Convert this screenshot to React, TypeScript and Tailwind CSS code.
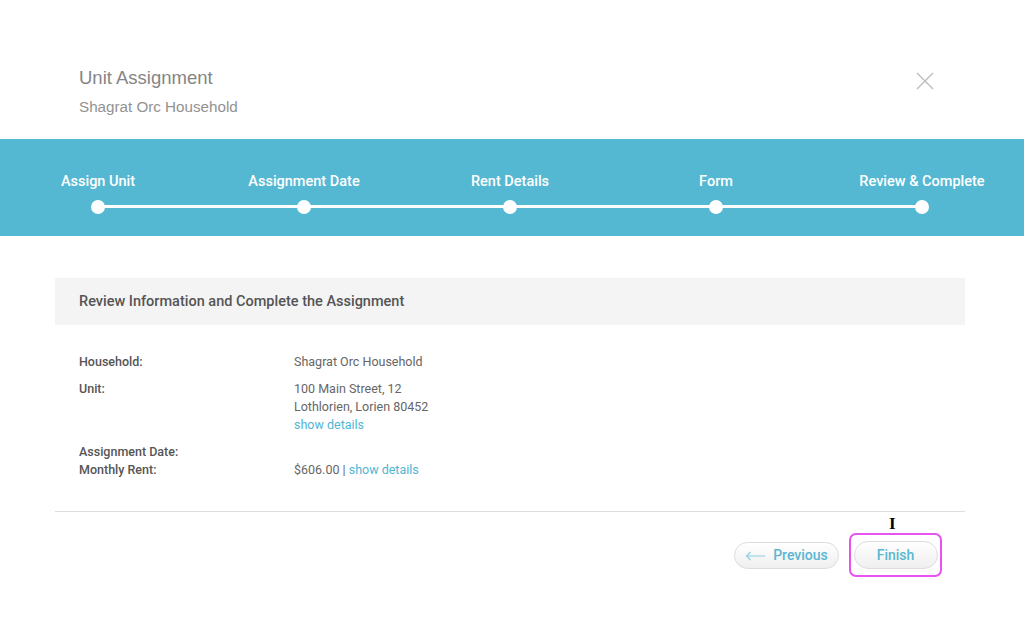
import React from "react";

const steps = ["Assign Unit", "Assignment Date", "Rent Details", "Form", "Review & Complete"];

const rows: { label: string; value?: React.ReactNode }[] = [
  { label: "Household:", value: "Shagrat Orc Household" },
];

function Stepper() {
  return (
    <div className="h-[97px] w-full overflow-hidden bg-[#55b8d2]">
      <div className="relative ml-[-5px] w-[1030px] pt-[34px]">
        <div className="absolute left-[103px] right-[103px] top-[66px] h-[3px] bg-white" />
        <div className="grid grid-cols-5">
          {steps.map((s) => (
            <div key={s} className="flex flex-col items-center">
              <span className="text-[14.5px] leading-[18px] font-medium text-white">{s}</span>
              <span className="relative mt-[9px] h-[14px] w-[14px] rounded-full bg-white" />
            </div>
          ))}
        </div>
      </div>
    </div>
  );
}

export default function App() {
  return (
    <div className="h-[640px] w-[1024px] bg-white font-['Roboto',sans-serif]">
      <div className="flex items-start justify-between px-[79px] pt-[67px] pr-[90px]">
        <div>
          <h1 className="text-[18.5px] leading-[22px] text-[#858585] font-['Liberation_Sans',sans-serif]">
            Unit Assignment
          </h1>
          <p className="mt-[8px] text-[15.2px] leading-[20px] text-[#929292] font-['Liberation_Sans',sans-serif]">
            Shagrat Orc Household
          </p>
        </div>
        <svg width="18" height="18" viewBox="0 0 18 18" className="mt-[5px]">
          <path d="M1 1 L17 17 M17 1 L1 17" stroke="#bdbdbd" strokeWidth="1.4" />
        </svg>
      </div>

      <div className="mt-[22px]">
        <Stepper />
      </div>

      <div className="ml-[55px] mr-[59px] mt-[42px]">
        <div className="flex h-[47px] items-center bg-[#f4f4f4] px-[24px]">
          <span className="text-[14.5px] font-medium text-[#555]">
            Review Information and Complete the Assignment
          </span>
        </div>

        <div className="px-[24px] pt-[28px] pb-[32px] text-[12.5px] text-[#666]">
          <div className="grid grid-cols-[215px_1fr] gap-y-[9px] leading-[18px]">
            {rows.map((r) => (
              <React.Fragment key={r.label}>
                <span className="font-medium text-[#555]">{r.label}</span>
                <span>{r.value}</span>
              </React.Fragment>
            ))}
            <span className="font-medium text-[#555]">Unit:</span>
            <div className="flex flex-col">
              <span>100 Main Street, 12</span>
              <span>Lothlorien, Lorien 80452</span>
              <a className="text-[#4fb6d3]">show details</a>
            </div>
          </div>
          <div className="mt-[9px] grid grid-cols-[215px_1fr] leading-[18px]">
            <span className="font-medium text-[#555]">Assignment Date:</span>
            <span />
            <span className="font-medium text-[#555]">Monthly Rent:</span>
            <span>
              $606.00 | <a className="text-[#4fb6d3]">show details</a>
            </span>
          </div>
        </div>

        <div className="h-px bg-[#dedede]" />

        <div className="flex items-start justify-end gap-[10px] pt-[21px] pr-[23px]">
          <button className="mt-[9px] flex h-[27px] w-[105px] items-center justify-center gap-[7px] rounded-full border border-[#dcdcdc] bg-gradient-to-b from-white to-[#efefef] text-[14px] font-medium text-[#5ab7d2]">
            <svg width="21" height="10" viewBox="0 0 21 10">
              <path d="M20 5 H1.5 M5.5 1 L1.5 5 L5.5 9" stroke="#8fd0e2" strokeWidth="1.2" fill="none" />
            </svg>
            Previous
          </button>
          <div className="relative">
            <span className="absolute left-[40px] top-[-18px] font-['Liberation_Serif',serif] text-[17px] font-bold leading-none text-black">
              I
            </span>
            <div className="flex h-[44px] w-[93px] items-center justify-center rounded-[7px] border-2 border-[#e653f0]">
              <button className="flex h-[28px] w-[84px] items-center justify-center rounded-full border border-[#dcdcdc] bg-gradient-to-b from-white to-[#efefef] text-[14px] font-medium text-[#5ab7d2]">
                Finish
              </button>
            </div>
          </div>
        </div>
      </div>
    </div>
  );
}
